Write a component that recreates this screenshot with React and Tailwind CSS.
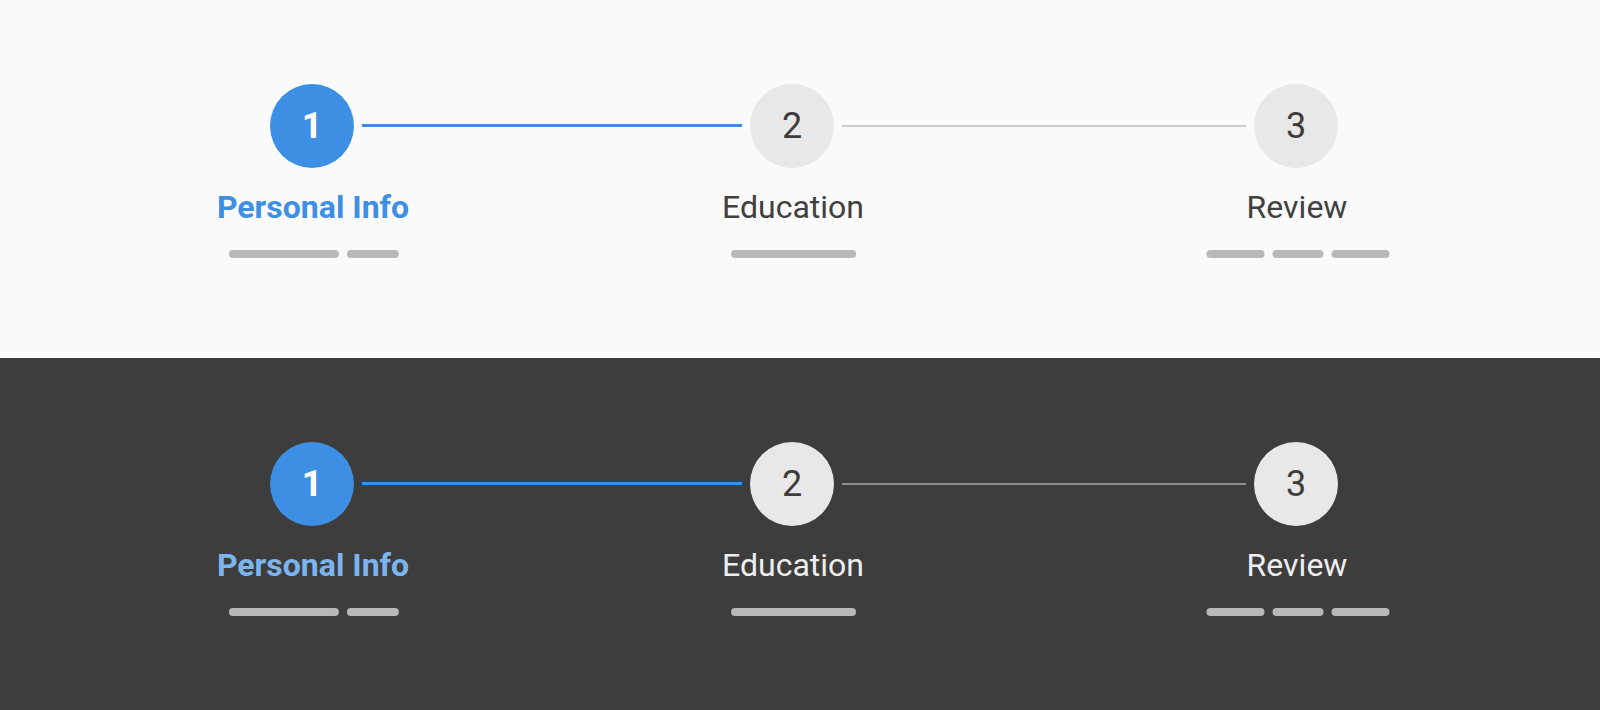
import React from 'react';

const steps = [
  { n: 1, label: 'Personal Info', bars: [110, 52] },
  { n: 2, label: 'Education', bars: [125] },
  { n: 3, label: 'Review', bars: [58, 51, 58] },
];

const Step = ({ step, active, dark }) => {
  const circle = active
    ? 'bg-[#3d8fe3] text-white font-bold'
    : 'bg-[#e8e8e8] text-[#3d3d3d] font-normal';
  const label = active
    ? dark
      ? 'text-[#7cb4ee] font-bold'
      : 'text-[#3d8fe3] font-bold'
    : dark
      ? 'text-[#eeeeee] font-normal'
      : 'text-[#404040] font-normal';

  return (
    <div className="relative flex flex-col items-center">
      <div className={`w-[84px] h-[84px] rounded-full flex items-center justify-center text-[36px] leading-none ${circle}`}>
        {step.n}
      </div>
      {/* label + placeholder bars hang under the circle */}
      <div className="absolute top-[84px] left-1/2 -translate-x-1/2 flex flex-col items-center">
        <div className={`mt-[23px] pl-[2px] text-[32px] leading-[32px] whitespace-nowrap ${label}`}>{step.label}</div>
        <div className="mt-[27px] pl-1 flex gap-2">
          {step.bars.map((w, i) => (
            <div key={i} className="h-2 rounded-full bg-[#b8b8b8]" style={{ width: w }} />
          ))}
        </div>
      </div>
    </div>
  );
};

const Stepper = ({ dark }) => (
  <div className={`flex items-start pl-[270px] pt-[84px] ${dark ? 'bg-[#3d3d3d] flex-1' : 'bg-[#fafafa] h-[358px]'}`}>
    <Step step={steps[0]} active dark={dark} />
    <div className="mt-[40px] mx-2 w-[380px] h-[3px] bg-[#3d8fe3]" />
    <Step step={steps[1]} dark={dark} />
    <div className={`mt-[41px] mx-2 w-[404px] h-[2px] ${dark ? 'bg-[#8c8c8c]' : 'bg-[#cccccc]'}`} />
    <Step step={steps[2]} dark={dark} />
  </div>
);

export default function App() {
  return (
    <div className="w-[1600px] h-[710px] flex flex-col font-['Roboto',sans-serif]">
      <Stepper />
      <Stepper dark />
    </div>
  );
}
